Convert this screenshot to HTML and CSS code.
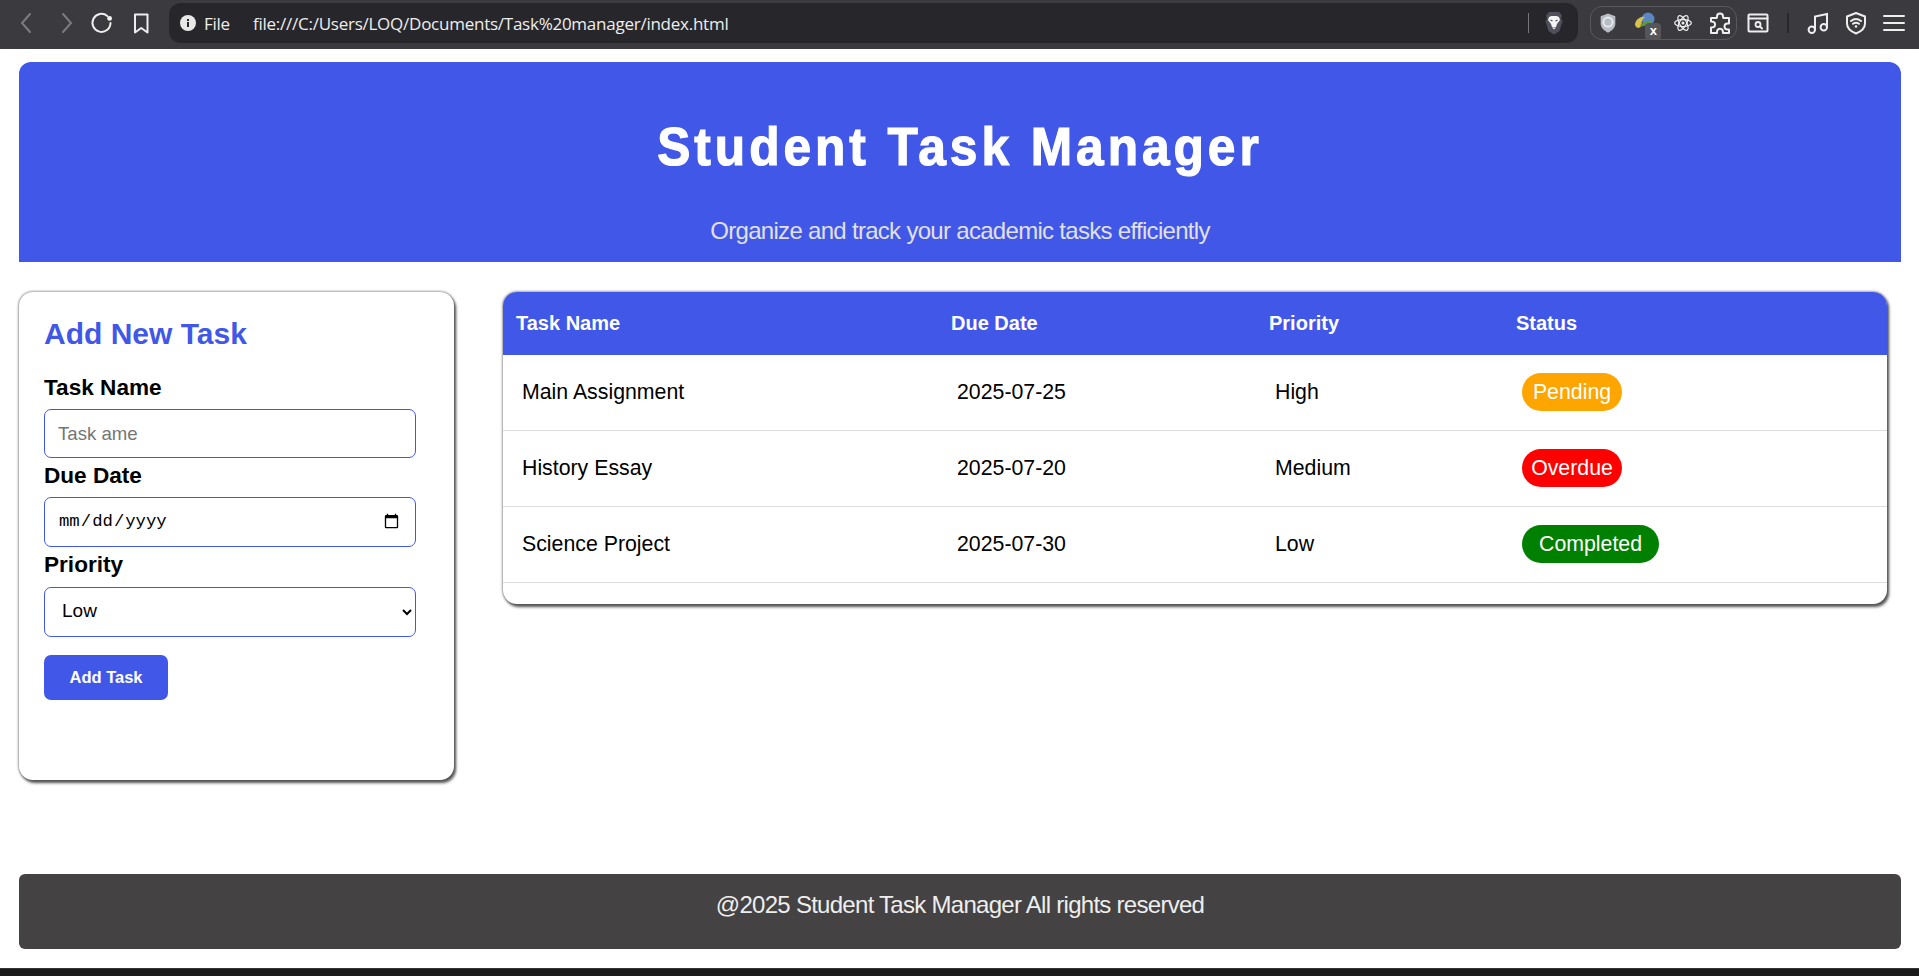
FILE: index.html
```html
<!DOCTYPE html>
<html lang="en">
<head>
<meta charset="utf-8">
<title>Student Task Manager</title>
<link rel="stylesheet" href="styles.css">
</head>
<body>
<div class="toolbar">
  <div class="nav">
    <svg class="ico" viewBox="0 0 24 24"><path class="dim" d="M15 3 7 12l8 9"/></svg>
    <svg class="ico" viewBox="0 0 24 24"><path class="dim" d="M9 3l8 9-8 9"/></svg>
    <svg class="ico reload" viewBox="0 0 24 24"><path class="lit" d="M20.5 12a9 9 0 1 1-3.2-7"/><circle cx="19.6" cy="7.4" r="2.4" fill="#f2f2f2"/></svg>
    <svg class="ico" viewBox="0 0 24 24"><path class="lit" d="M6 3.500h12.500v18l-6.250-4.500-6.250 4.500z" stroke-linejoin="round"/></svg>
  </div>
  <div class="urlbar">
    <svg class="info" viewBox="0 0 16 16"><circle cx="8" cy="8" r="8" fill="#e8e8e8"/><rect x="7" y="7" width="2" height="5" fill="#27272b"/><rect x="7" y="4" width="2" height="2" fill="#27272b"/></svg>
    <span class="file">File</span>
    <span class="url">file:///C:/Users/LOQ/Documents/Task%20manager/index.html</span>
    <span class="urlsep"></span>
    <svg class="lion" viewBox="0 0 20 24"><path d="M5 1h10l3 3.500-1 3 1.500 2.500-3 10-5.500 3.500L4.500 20l-3-10L3 7.500l-1-3z" fill="#50505c"/><path d="M5 6l2.500-1h5L15 6l1 3-3 4-1 3h-4l-1-3-3-4z" fill="#f4f4f4"/><path d="M8 16.500h4l-2 2z" fill="#f4f4f4"/><path d="M6.500 9l2 1M13.500 9l-2 1" stroke="#50505c" stroke-width="1.200"/></svg>
  </div>
  <div class="extpill">
    <svg class="ext" viewBox="0 0 20 24"><path d="M10 1.500l8 3v8c0 5-4 8-8 10-4-2-8-5-8-10v-8z" fill="#b8bcc4"/><circle cx="10" cy="11" r="5" fill="none" stroke="#e8eaee" stroke-width="2"/></svg>
    <span class="idm">
      <svg class="ext" viewBox="0 0 24 24"><circle cx="15" cy="8" r="6.500" fill="#5b86c4"/><path d="M2 13c1-5 6-8 10-7-3 2-4 5-3 8-1 2-3 3-4 3-2-1-3-2-3-4z" fill="#d8c24a"/><path d="M7 15c2-4 7-6 13-5-3 3-8 6-13 5z" fill="#5f9a3f"/></svg>
      <span class="xbadge">x</span>
    </span>
    <svg class="ext" viewBox="0 0 24 24"><g fill="none" stroke="#eee" stroke-width="1.500"><ellipse cx="12" cy="12" rx="10" ry="4.200"/><ellipse cx="12" cy="12" rx="10" ry="4.200" transform="rotate(60 12 12)"/><ellipse cx="12" cy="12" rx="10" ry="4.200" transform="rotate(120 12 12)"/></g><circle cx="12" cy="12" r="1.800" fill="#eee"/></svg>
    <svg class="ext puzzle" viewBox="0 0 24 24"><path class="lit" d="M9 5.500a3 3 0 1 1 6 0c0 .7 0 1 .3 1.500H21v5.500h-1.500a3 3 0 1 0 0 6H21V22h-6c0-1.500 0-1.700-.3-2.300a2.800 2.800 0 0 0-5.400 0c-.3.600-.3.800-.3 2.300H3v-5.500c1.500 0 1.800 0 2.300-.3a2.900 2.900 0 0 0 0-5.400C4.800 10.500 4.500 10.500 3 10.500V7h5.700c.3-.5.300-.8.300-1.500z" stroke-linejoin="round"/></svg>
  </div>
  <div class="tools">
    <svg class="tool t-box" viewBox="0 0 22 22"><path class="lit" d="M1.500 3.500a1 1 0 0 1 1-1h17a1 1 0 0 1 1 1v15a1 1 0 0 1-1 1h-17a1 1 0 0 1-1-1z"/><path class="lit" d="M1.500 6.500h19"/><circle cx="11" cy="12.500" r="2.500" fill="none" stroke="#eee" stroke-width="1.800"/><path class="lit" d="M13 14.500l2 2"/></svg>
    <span class="toolsep"></span>
    <svg class="tool t-music" viewBox="0 0 24 24"><path class="lit" d="M9 18.500V5.500l12-2.500v13"/><circle cx="5.800" cy="18.800" r="3.200" class="lit"/><circle cx="17.800" cy="16.300" r="3.200" class="lit"/></svg>
    <svg class="tool t-shield" viewBox="0 0 24 24"><path class="lit" d="M12 2l9 3.500v7c0 5-4 8-9 10-5-2-9-5-9-10v-7z" stroke-linejoin="round"/><path class="lit" d="M7 10c3-2.500 7-2.500 10 0M9 12.800c2-1.500 4-1.500 6 0"/><circle cx="12" cy="15.500" r="1.300" fill="#eee"/></svg>
    <svg class="tool t-menu" viewBox="0 0 22 18"><path class="lit" d="M1 2h20M1 9h20M1 16h20"/></svg>
  </div>
</div>

<div class="page">
  <header class="hero">
    <h1>Student Task Manager</h1>
    <p>Organize and track your academic tasks efficiently</p>
  </header>

  <main class="content">
    <section class="card form-card">
      <h2>Add New Task</h2>
      <form class="task-form">
        <label for="task">Task Name</label>
        <input id="task" class="field" type="text" placeholder="Task ame">
        <label for="due">Due Date</label>
        <input id="due" class="field date" type="date">
        <label for="prio">Priority</label>
        <select id="prio" class="field select"><option>Low</option><option>Medium</option><option>High</option></select>
        <button type="button" class="add">Add Task</button>
      </form>
    </section>

    <section class="card table-card">
      <table>
        <thead>
          <tr><th class="c1">Task Name</th><th class="c2">Due Date</th><th class="c3">Priority</th><th class="c4">Status</th></tr>
        </thead>
        <tbody>
          <tr><td>Main Assignment</td><td>2025-07-25</td><td>High</td><td><span class="badge pending">Pending</span></td></tr>
          <tr><td>History Essay</td><td>2025-07-20</td><td>Medium</td><td><span class="badge overdue">Overdue</span></td></tr>
          <tr><td>Science Project</td><td>2025-07-30</td><td>Low</td><td><span class="badge done">Completed</span></td></tr>
        </tbody>
      </table>
    </section>
  </main>

  <footer class="foot">@2025 Student Task Manager All rights reserved</footer>
</div>
<div class="taskbar"></div>
</body>
</html>
```

FILE: styles.css
```css
* { box-sizing: border-box; }
html, body { height: 100%; }
body {
  margin: 0;
  display: flex;
  flex-direction: column;
  overflow: hidden;
  background: #fff;
  color: #000;
  font-family: "Liberation Sans", Arial, sans-serif;
}

/* browser chrome */
.toolbar {
  flex: none;
  height: 49px;
  display: flex;
  align-items: center;
  background: #3b3a3f;
  padding-bottom: 3px;
}
.nav {
  width: 169px;
  display: flex;
  align-items: center;
  padding-left: 15px;
  gap: 15px;
}
.ico { width: 24px; height: 24px; flex: none; }
.reload { margin-left: -3px; }
.dim, .lit { fill: none; stroke-width: 2; stroke-linecap: round; }
.dim { stroke: #7c7c80; }
.lit { fill: none; stroke: #eee; }
.urlbar {
  width: 1409px;
  height: 40px;
  background: #27272b;
  border-radius: 12px;
  display: flex;
  align-items: center;
  padding-left: 11px;
  color: #eee;
  font-family: "Open Sans", sans-serif;
  font-size: 17px;
}
.info { width: 16px; height: 16px; flex: none; }
.file { margin-left: 8px; width: 49px; letter-spacing: -0.3px; }
.url { flex: 1; letter-spacing: -0.25px; white-space: nowrap; }
.urlsep { width: 1px; height: 20px; background: #77777b; }
.lion { width: 20px; height: 24px; margin: 0 14px 0 15px; flex: none; }
.extpill {
  width: 147px;
  height: 34px;
  margin-left: 12px;
  border: 1px solid #5a5a5e;
  border-radius: 12px;
  display: flex;
  align-items: center;
  justify-content: space-between;
  padding: 0 4px 0 7px;
}
.ext { width: 20px; height: 22px; flex: none; }
.puzzle { width: 24px; height: 24px; }
.idm { position: relative; display: flex; }
.idm .ext { width: 24px; height: 24px; }
.xbadge {
  position: absolute;
  left: 12px;
  top: 12px;
  width: 16px;
  height: 17px;
  border-radius: 4px;
  background: #55555a;
  color: #fff;
  font: bold 13px/16px "Liberation Sans", sans-serif;
  text-align: center;
}
.tools { display: flex; align-items: center; margin-left: 10px; }
.tool { flex: none; }
.t-box { width: 22px; height: 22px; }
.toolsep { width: 2px; height: 20px; background: #28282c; margin: 0 17px 0 18px; }
.t-music { width: 24px; height: 24px; }
.t-shield { width: 24px; height: 24px; margin-left: 14px; }
.t-menu { width: 22px; height: 18px; margin-left: 15px; }

/* page */
.page {
  flex: 1;
  min-height: 0;
  display: flex;
  flex-direction: column;
  padding: 13px 18px 19px 19px;
}
.hero {
  flex: none;
  height: 200px;
  background: #4157e8;
  border-radius: 12px 12px 0 0;
  text-align: center;
  color: #fff;
  padding-top: 52px;
}
.hero h1 {
  margin: 0;
  font-size: 54px;
  line-height: 64px;
  font-weight: 700;
  letter-spacing: 4.3px;
  -webkit-text-stroke: 1.2px #fff;
  transform: scaleX(0.92);
}
.hero p {
  margin: 38px 0 0;
  font-size: 24px;
  line-height: 30px;
  color: #e0e0e0;
  letter-spacing: -0.7px;
}

.content {
  flex: 1;
  min-height: 0;
  display: flex;
  align-items: flex-start;
  gap: 49px;
  padding-top: 30px;
}
.card {
  background: #fff;
  border-radius: 14px;
  box-shadow: 2px 3px 3px #555, 0 0 3px #444;
}
.form-card {
  flex: none;
  width: 435px;
  height: 488px;
  padding: 25px;
}
.form-card h2 {
  margin: 0 0 23px;
  font-size: 30px;
  line-height: 34px;
  color: #4157e8;
}
.task-form { display: flex; flex-direction: column; align-items: flex-start; }
.task-form label {
  font-size: 22.6px;
  line-height: 28px;
  font-weight: 700;
  margin-bottom: 7px;
}
.field {
  display: block;
  width: 372px;
  margin: 0 0 4px;
  border: 1px solid #4157e8;
  border-radius: 7px;
  background: #fff;
  padding: 0 13px;
  font-family: "Liberation Sans", sans-serif;
  font-size: 18.6px;
  height: 49px;
  color: #000;
}
.field::placeholder { color: #757575; }
.date {
  height: 50px;
  font-family: "Liberation Mono", monospace;
  font-size: 17.3px;
}
.task-form label[for="prio"] { margin-bottom: 8px; }
.select { height: 50px; margin-bottom: 18px; font-size: 19px; padding: 0 16px 3px 13px; }
.add {
  width: 124px;
  height: 45px;
  background: #4157e8;
  color: #fff;
  border: 0;
  border-radius: 7px;
  font-family: "Liberation Sans", sans-serif;
  font-size: 16.5px;
  font-weight: 700;
  padding: 0;
}

.table-card {
  flex: 1;
  height: 312px;
  margin-right: 14px;
  overflow: hidden;
}
table {
  width: 100%;
  border-collapse: collapse;
  table-layout: fixed;
}
th {
  background: #4157e8;
  color: #fff;
  height: 63px;
  padding: 0 13px;
  text-align: left;
  font-size: 20px;
  font-weight: 700;
}
.c1 { width: 435px; }
.c2 { width: 318px; }
.c3 { width: 247px; }
td {
  height: 76px;
  padding: 0 19px;
  font-size: 21.3px;
  border-bottom: 1px solid #ddd;
}
tbody tr:first-child td { height: 75px; }
.badge {
  display: inline-block;
  height: 38px;
  min-width: 100px;
  padding: 0 8px;
  border-radius: 19px;
  color: #fff;
  line-height: 38px;
  text-align: center;
  white-space: nowrap;
}
.pending { background: #ffa500; }
.overdue { background: #f00; }
.done { background: #008000; padding: 0 17px; }

.foot {
  flex: none;
  height: 75px;
  background: #444242;
  border-radius: 6px;
  color: #eee;
  font-size: 24px;
  line-height: 62px;
  text-align: center;
  letter-spacing: -0.72px;
}
.taskbar {
  flex: none;
  height: 8px;
  background: #1a1a1a;
  border-top: 1px solid #333;
}
```
